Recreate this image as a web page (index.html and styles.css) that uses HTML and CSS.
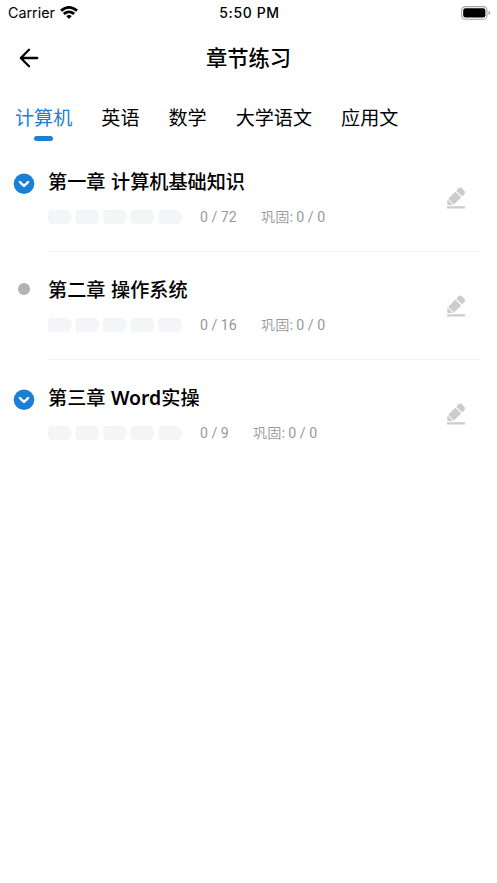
FILE: index.html
```html
<!DOCTYPE html>
<html lang="zh-CN">
<head>
<meta charset="utf-8">
<meta name="viewport" content="width=device-width, initial-scale=1">
<title>章节练习</title>
<link rel="stylesheet" href="styles.css">
</head>
<body>
<svg class="defs" aria-hidden="true">
  <symbol id="edit" viewBox="0 0 20 22">
    <path d="M1.6 12.6 7.1 18.1H2.3a1 1 0 0 1-1-1v-4.2Z"/>
    <path d="M2.2 11.7 9.3 4.6 15.1 10.4 8 17.5Z"/>
    <path d="M10.2 3.7 12.6 1.3a2.3 2.3 0 0 1 3.2 0l2.6 2.6a2.3 2.3 0 0 1 0 3.2L16 9.5Z"/>
    <rect x="1" y="19.3" width="18" height="2.3" rx=".7"/>
  </symbol>
  <symbol id="bars" viewBox="0 0 135 14">
    <path id="seg" d="M3 0H19.5Q21.5 0 22 2.4L23.4 5Q24.6 7 23.4 9L22 11.6Q21.5 14 19.5 14H3Q0 14 0 11V3Q0 0 3 0Z"/>
    <use href="#seg" x="27.6"/><use href="#seg" x="55.2"/><use href="#seg" x="82.8"/><use href="#seg" x="110.4"/>
  </symbol>
  <symbol id="open" viewBox="0 0 22 22">
    <circle cx="11" cy="10.7" r="10.3" fill="#1b80d5"/>
    <path d="M6.9 9.1 11 12.9 15.1 9.1" fill="none" stroke="#fff" stroke-width="2.4" stroke-linecap="round" stroke-linejoin="round"/>
  </symbol>
</svg>
<header class="status">
  <div class="carrier"><span>Carrier</span>
    <svg class="wifi" viewBox="0 0 18 13"><g fill="none" stroke="#000" stroke-width="2.7"><path d="M1 4.6Q9-2 17 4.6"/><path d="M3.8 7.9Q9 3.7 14.2 7.9"/></g><path d="M6.2 10.1Q9 8 11.8 10.1L9 12.9Z"/></svg>
  </div>
  <div class="time">5:50 PM</div>
  <svg class="battery" viewBox="0 0 30 14"><rect x=".6" y=".6" width="25.4" height="12.6" rx="3.8" fill="none" stroke="#a3a3a3" stroke-width="1.1"/><rect x="2.2" y="2.2" width="22.2" height="9.4" rx="2.3"/><path d="M27.6 4.7Q29.2 5.3 29.2 6.9T27.6 9.1Z" fill="#999"/></svg>
</header>
<nav class="navbar">
  <svg class="back" viewBox="0 0 20 20"><path d="M10 1.7 1.8 10 10 18.3M2 10H18.3" fill="none" stroke="#000" stroke-width="2.3" stroke-linecap="round" stroke-linejoin="round"/></svg>
  <h1>章节练习</h1>
</nav>
<div class="tabs">
  <div class="tab active">计算机</div><div class="tab">英语</div><div class="tab">数学</div><div class="tab">大学语文</div><div class="tab">应用文</div>
</div>
<main>
  <section class="chapter">
    <svg class="marker"><use href="#open"/></svg>
    <div class="body">
      <div class="info"><h2>第一章 计算机基础知识</h2>
        <div class="stats"><svg class="bars"><use href="#bars"/></svg><span class="count">0 / 72</span><span class="review">巩固: <b>0 / 0</b></span></div></div>
      <svg class="edit"><use href="#edit"/></svg>
    </div>
  </section>
  <section class="chapter">
    <div class="marker"><i class="dot"></i></div>
    <div class="body">
      <div class="info"><h2>第二章 操作系统</h2>
        <div class="stats"><svg class="bars"><use href="#bars"/></svg><span class="count">0 / 16</span><span class="review">巩固: <b>0 / 0</b></span></div></div>
      <svg class="edit"><use href="#edit"/></svg>
    </div>
  </section>
  <section class="chapter">
    <svg class="marker"><use href="#open"/></svg>
    <div class="body">
      <div class="info"><h2>第三章 <span class="latin">Word</span>实操</h2>
        <div class="stats"><svg class="bars"><use href="#bars"/></svg><span class="count short">0 / 9</span><span class="review">巩固: <b>0 / 0</b></span></div></div>
      <svg class="edit"><use href="#edit"/></svg>
    </div>
  </section>
</main>
</body>
</html>
```
FILE: styles.css
```css
* { box-sizing: border-box; }
body { margin: 0; min-height: 883px; background: #fff; color: #000; font-family: "Noto Sans CJK SC", sans-serif; }
h1, h2 { margin: 0; font-weight: 500; }
svg { display: block; flex: none; }
.defs { width: 0; height: 0; position: absolute; }
.status { height: 26px; display: grid; grid-template-columns: 1fr auto 1fr; align-items: center; padding: 0 6px 0 8px; font: 14.3px/26px Inter, sans-serif; }
.carrier { display: flex; align-items: center; gap: 5px; }
.wifi { width: 18px; height: 13px; margin-top: -2px; }
.time { font-weight: 500; font-size: 14px; letter-spacing: .6px; }
.battery { width: 30px; height: 14px; justify-self: end; margin-top: -1px; }
.navbar { height: 64px; display: grid; grid-template-columns: 40px 1fr 40px; align-items: center; padding: 0 19px; }
.back { width: 20px; height: 20px; }
h1 { text-align: center; font-size: 21.3px; line-height: 30px; margin-top: -2px; }
.tabs { height: 68px; display: flex; gap: 29px; padding: 13px 15px 0; font-size: 19.1px; line-height: 28px; }
.tab { white-space: nowrap; }
.active { color: #1b80d5; display: flex; flex-direction: column; align-items: center; }
.active::after { content: ""; width: 19px; height: 5px; margin-top: 5px; border-radius: 3px; background: #1b80d5; }
.chapter { height: 108px; display: flex; padding: 0 16px 0 13px; }
.marker { width: 22px; height: 22px; margin: 15px 13px 0 0; display: grid; place-items: center; flex: none; }
.dot { width: 12px; height: 12px; border-radius: 50%; background: #b2b2b2; margin-top: -6px; }
.body { flex: 1; height: 94px; display: flex; justify-content: space-between; border-bottom: 1px solid #f4f4f4; }
.chapter:last-child .body { border: 0; }
.info { padding-top: 9px; }
h2 { font-size: 19.15px; line-height: 28px; height: 28px; white-space: nowrap; word-spacing: 1.3px; }
.latin { font: 600 19.4px/20px "Noto Sans", sans-serif; }
.stats { height: 22px; margin-top: 11px; display: flex; align-items: center; color: #999; line-height: 22px; white-space: nowrap; }
.bars { width: 135px; height: 14px; fill: #f4f5f7; }
.count { width: 61px; margin-left: 17px; font: 400 14.2px/22px Roboto, sans-serif; }
.short { width: 53px; }
.review { height: 22px; margin-top: -2px; font-size: 14.2px; font-weight: 350; }
.review b { font: 400 14.2px/22px Roboto, sans-serif; }
.edit { width: 20px; height: 22px; margin: 29px 15px 0 0; fill: #ccc; }
```
